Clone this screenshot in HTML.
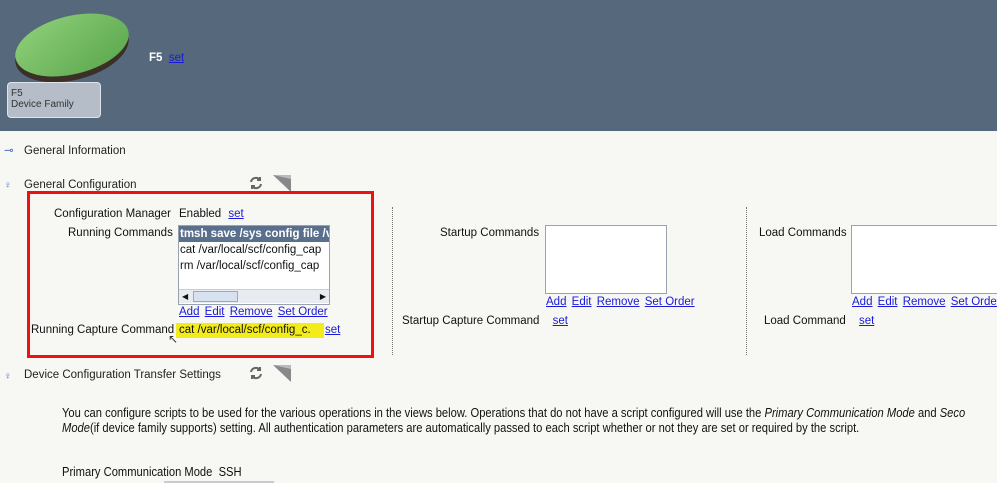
<!DOCTYPE html>
<html><head><meta charset="utf-8"><style>
*{margin:0;padding:0;box-sizing:border-box}
html,body{width:997px;height:483px;overflow:hidden}
body{background:#f7f7f4;font-family:"Liberation Sans",sans-serif;color:#111;position:relative}
#w{position:absolute;left:0;top:0;width:997px;height:483px;overflow:hidden}
.t{position:absolute;white-space:nowrap;font-size:11.5px;line-height:13px}
a{color:#1a1ad8;text-decoration:underline}
.b{font-weight:bold;color:#fff}
.h{font-size:11.5px;color:#222}
.list{position:absolute;background:#fff;border:1px solid #9aa3ad}
.dot{position:absolute;width:0;border-left:1px dotted #777}
</style></head><body><div id="w">
<div style="position:absolute;left:0;top:0;width:997px;height:131px;background:#55687c"></div>
<svg style="position:absolute;left:10px;top:10px" width="125" height="80">
<defs><linearGradient id="g" x1="0" y1="0" x2="1" y2="1"><stop offset="0" stop-color="#8fd07a"/><stop offset="1" stop-color="#5aa64c"/></linearGradient></defs>
<ellipse cx="62" cy="40" rx="58" ry="30" transform="rotate(-14 62 40)" fill="#3a3028"/>
<ellipse cx="62" cy="35" rx="58" ry="29" transform="rotate(-14 62 35)" fill="url(#g)"/>
</svg>
<div style="position:absolute;left:7px;top:82px;width:94px;height:36px;background:#b5bec8;border:1px solid #e0e4ea;border-radius:4px"></div>
<div class="t" style="left:11px;top:88px;color:#333;font-size:10px;line-height:11px">F5<br>Device Family</div>
<div class="t b" style="left:149px;top:52px">F5&nbsp; <a href="#" style="font-weight:normal;color:#1a1ad8">set</a></div>

<div class="t" style="left:4px;top:145px;color:#4a6fc0">⊸</div>
<div class="t h" style="left:24px;top:145px">General Information</div>
<div class="t" style="left:4px;top:179px;color:#4a6fc0;font-size:10px">♀</div>
<div class="t h" style="left:24px;top:179px">General Configuration</div>
<svg style="position:absolute;left:249px;top:176px" width="14" height="14"><path d="M2 6 A5 5 0 0 1 11 4 M11 1 V4 H8 M12 8 A5 5 0 0 1 3 10 M3 13 V10 H6" stroke="#666" stroke-width="2" fill="none"/></svg>
<svg style="position:absolute;left:273px;top:175px" width="20" height="18"><polygon points="0,0 18,0 18,17" fill="#888"/><polygon points="0,0 18,0 18,4" fill="#bbb"/></svg>

<div style="position:absolute;left:27px;top:191px;width:347px;height:167px;border:3px solid #f01010"></div>
<div class="t" style="left:54px;top:208px">Configuration Manager</div>
<div class="t" style="left:179px;top:208px">Enabled <a href="#" style="margin-left:4px">set</a></div>
<div class="t" style="left:68px;top:227px">Running Commands</div>
<div class="list" style="left:178px;top:225px;width:152px;height:80px;overflow:hidden">
<div style="background:#5a6f8c;color:#fff;font-weight:bold;height:16px;font-size:11.5px;line-height:16px;padding-left:1px;white-space:nowrap">tmsh save /sys config file /var</div>
<div style="font-size:11.5px;line-height:16px;padding-left:1px;white-space:nowrap">cat /var/local/scf/config_cap</div>
<div style="font-size:11.5px;line-height:16px;padding-left:1px;white-space:nowrap">rm /var/local/scf/config_cap</div>
<div style="position:absolute;left:0;top:63px;width:150px;height:14px;background:#e8ebef;border-top:1px solid #ccc">
<div style="position:absolute;left:14px;top:1px;width:45px;height:11px;background:#d6e2f0;border:1px solid #9ab"></div>
<div style="position:absolute;left:3px;top:2px;font-size:8px">◀</div>
<div style="position:absolute;right:3px;top:2px;font-size:8px">▶</div></div>
</div>
<div class="t" style="left:179px;top:306px"><a href="#">Add</a> <a href="#" style="margin-left:2px">Edit</a> <a href="#" style="margin-left:2px">Remove</a> <a href="#" style="margin-left:2px">Set Order</a></div>
<div class="t" style="left:31px;top:324px">Running Capture Command</div>
<div class="t" style="left:176px;top:323px;background:#f4ec1a;padding:1px 3px;width:148px">cat /var/local/scf/config_c.</div>
<div class="t" style="left:325px;top:324px"><a href="#">set</a></div>
<div class="t" style="left:168px;top:333px;color:#333;font-size:12px">↖</div>

<div class="dot" style="left:392px;top:207px;height:148px"></div>
<div class="dot" style="left:746px;top:207px;height:148px"></div>
<div class="t" style="left:440px;top:227px">Startup Commands</div>
<div class="list" style="left:545px;top:225px;width:122px;height:69px"></div>
<div class="t" style="left:546px;top:296px"><a href="#">Add</a> <a href="#" style="margin-left:2px">Edit</a> <a href="#" style="margin-left:2px">Remove</a> <a href="#" style="margin-left:2px">Set Order</a></div>
<div class="t" style="left:402px;top:315px">Startup Capture Command <a href="#" style="margin-left:10px">set</a></div>
<div class="t" style="left:759px;top:227px">Load Commands</div>
<div class="list" style="left:851px;top:225px;width:146px;height:69px;border-right:none"></div>
<div class="t" style="left:852px;top:296px;width:145px;overflow:hidden"><a href="#">Add</a> <a href="#" style="margin-left:2px">Edit</a> <a href="#" style="margin-left:2px">Remove</a> <a href="#" style="margin-left:2px">Set Order</a></div>
<div class="t" style="left:764px;top:315px">Load Command <a href="#" style="margin-left:10px">set</a></div>

<div class="t" style="left:4px;top:370px;color:#4a6fc0;font-size:10px">♀</div>
<div class="t h" style="left:24px;top:369px">Device Configuration Transfer Settings</div>
<svg style="position:absolute;left:249px;top:366px" width="14" height="14"><path d="M2 6 A5 5 0 0 1 11 4 M11 1 V4 H8 M12 8 A5 5 0 0 1 3 10 M3 13 V10 H6" stroke="#666" stroke-width="2" fill="none"/></svg>
<svg style="position:absolute;left:273px;top:365px" width="20" height="18"><polygon points="0,0 18,0 18,17" fill="#888"/><polygon points="0,0 18,0 18,4" fill="#bbb"/></svg>

<div style="position:absolute;left:62px;top:405px;width:935px;height:40px;overflow:hidden">
<div class="t" style="left:0;top:0;font-size:13px;line-height:15px;transform:scaleX(0.86);transform-origin:0 0">You can configure scripts to be used for the various operations in the views below. Operations that do not have a script configured will use the <i>Primary Communication Mode</i> and <i>Seco</i></div>
<div class="t" style="left:0;top:15px;font-size:13px;line-height:15px;transform:scaleX(0.86);transform-origin:0 0"><i>Mode</i>(if device family supports) setting. All authentication parameters are automatically passed to each script whether or not they are set or required by the script.</div>
</div>
<div class="t" style="left:62px;top:464px;font-size:13px;line-height:15px;transform:scaleX(0.86);transform-origin:0 0">Primary Communication Mode&nbsp; SSH</div>
<div style="position:absolute;left:164px;top:481px;width:110px;height:2px;background:#ccc"></div>
</div></body></html>
